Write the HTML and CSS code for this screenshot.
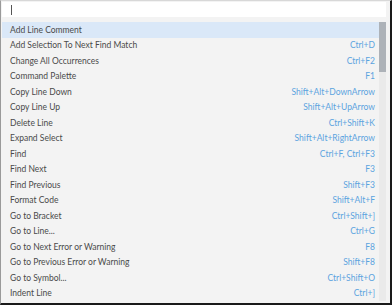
FILE: index.html
```html
<!DOCTYPE html>
<html lang="en">
<head>
	<meta charset="UTF-8">
	<title>Command Palette</title>
	<link rel="stylesheet" href="styles.css">
</head>
<body>
	<div class="palette">
		<div class="search">
			<span class="caret"></span>
		</div>
		<div class="list-wrap">
			<ul class="list">
				<li class="selected"><span class="name">Add Line Comment</span><span class="key"></span></li>
				<li><span class="name">Add Selection To Next Find Match</span><span class="key">Ctrl+D</span></li>
				<li><span class="name">Change All Occurrences</span><span class="key">Ctrl+F2</span></li>
				<li><span class="name">Command Palette</span><span class="key">F1</span></li>
				<li><span class="name">Copy Line Down</span><span class="key">Shift+Alt+DownArrow</span></li>
				<li><span class="name">Copy Line Up</span><span class="key">Shift+Alt+UpArrow</span></li>
				<li><span class="name">Delete Line</span><span class="key">Ctrl+Shift+K</span></li>
				<li><span class="name">Expand Select</span><span class="key">Shift+Alt+RightArrow</span></li>
				<li><span class="name">Find</span><span class="key">Ctrl+F, Ctrl+F3</span></li>
				<li><span class="name">Find Next</span><span class="key">F3</span></li>
				<li><span class="name">Find Previous</span><span class="key">Shift+F3</span></li>
				<li><span class="name">Format Code</span><span class="key">Shift+Alt+F</span></li>
				<li><span class="name">Go to Bracket</span><span class="key">Ctrl+Shift+]</span></li>
				<li><span class="name">Go to Line...</span><span class="key">Ctrl+G</span></li>
				<li><span class="name">Go to Next Error or Warning</span><span class="key">F8</span></li>
				<li><span class="name">Go to Previous Error or Warning</span><span class="key">Shift+F8</span></li>
				<li><span class="name">Go to Symbol...</span><span class="key">Ctrl+Shift+O</span></li>
				<li><span class="name">Indent Line</span><span class="key">Ctrl+]</span></li>
			</ul>
			<div class="scrollbar">
				<div class="thumb"></div>
			</div>
		</div>
	</div>
</body>
</html>
```

FILE: styles.css
```css
* {
	margin: 0;
	padding: 0;
	box-sizing: border-box;
}

body {
	font-family: 'Lato', sans-serif;
	width: 392px;
	height: 305px;
	overflow: hidden;
	background: #FFF;
}

/* Outer frame */
.palette {
	width: 392px;
	height: 305px;
	background: #F3F3F3;
	border-left: 1px solid #9A9A9A;
	border-top: 1px solid #D8D8D8;
	border-right: 2px solid #1A1A1A;
	border-bottom: 2px solid #1A1A1A;
	padding: 1px 4px 0 1px;
	overflow: hidden;
}

/* Search input */
.search {
	height: 15px;
	background: #FFF;
	display: flex;
	align-items: center;
	padding-left: 9px;
}

.caret {
	width: 1px;
	height: 10px;
	background: #555;
}

/* Command list */
.list-wrap {
	display: flex;
	margin-top: 5px;
}

.list {
	list-style: none;
	flex-grow: 1;
}

.list li {
	display: flex;
	justify-content: space-between;
	align-items: center;
	height: 15.5px;
	padding: 0 4px 0 8px;
	font-size: 8.5px;
}

.list li.selected {
	background: #DAE8F8;
}

.name {
	color: #4A4A4A;
}

.key {
	color: #5BA3DF;
}

/* Scrollbar */
.scrollbar {
	width: 7px;
	background: #EAEAEA;
}

.thumb {
	height: 50px;
	background: #ADB2B8;
}
```
